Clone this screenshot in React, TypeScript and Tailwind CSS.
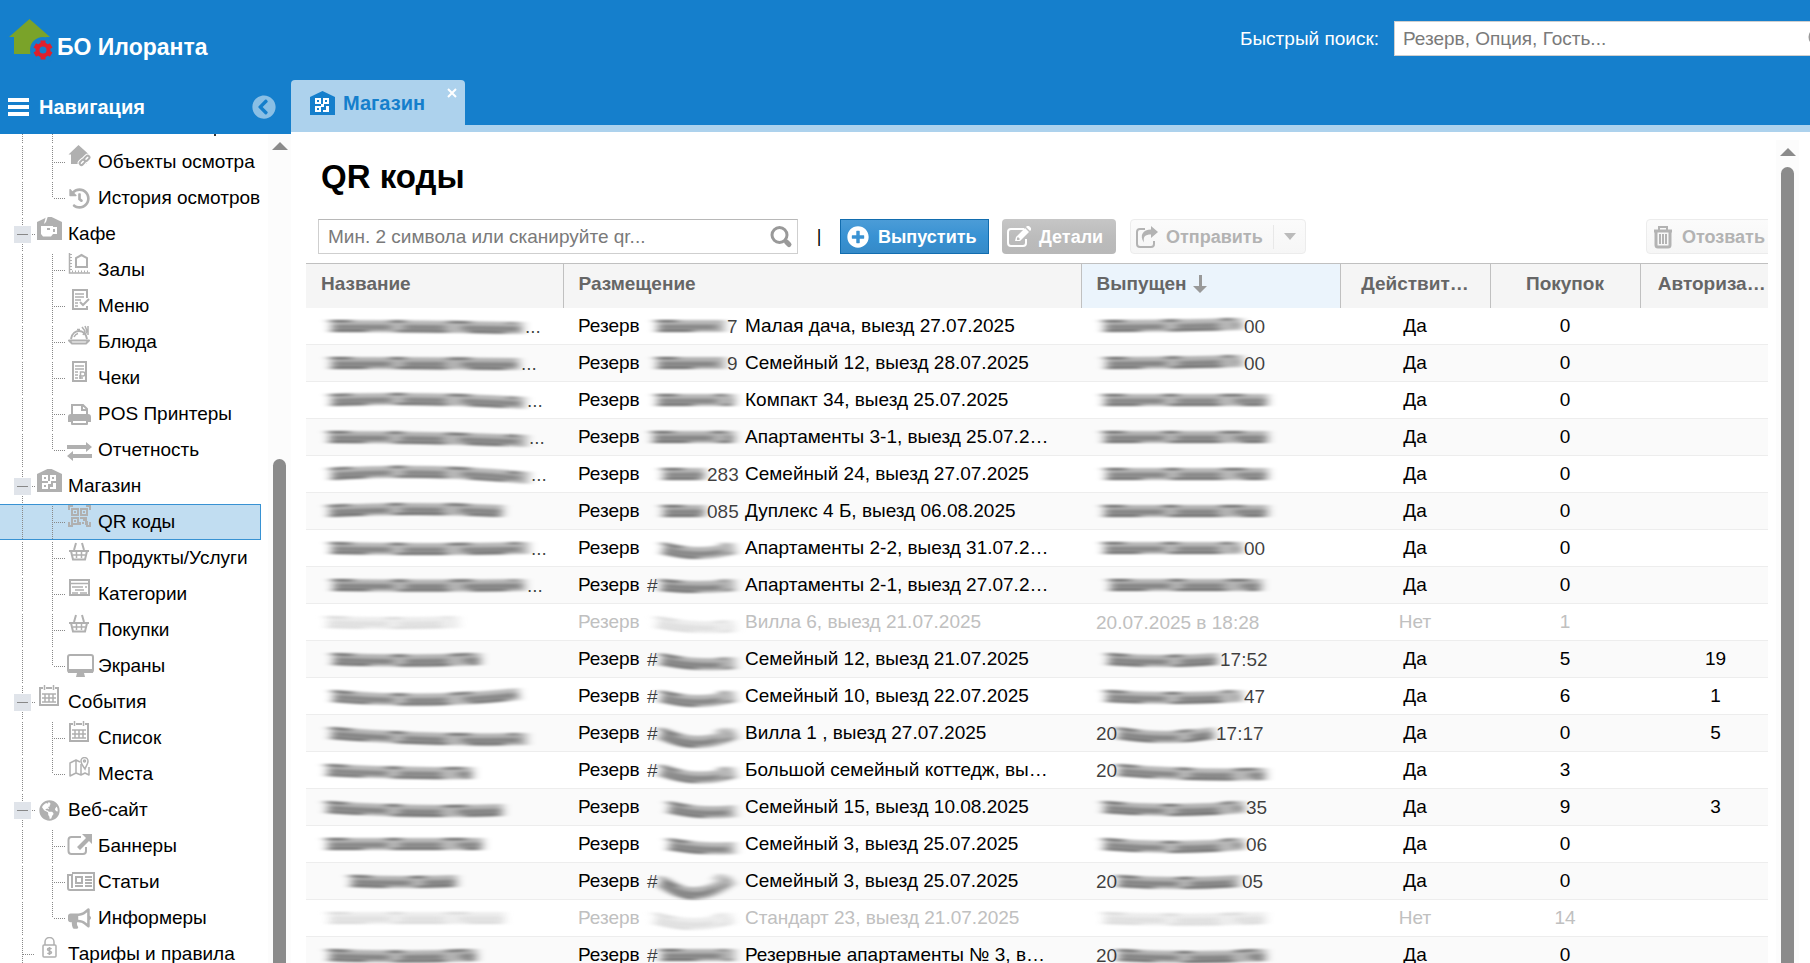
import type { ReactNode } from "react";
import {
  FaBullhorn,
  FaChevronCircleLeft,
  FaGlobeAmericas,
  FaHistory,
  FaPlusCircle,
} from "react-icons/fa";

type Icon = () => ReactNode;

type TreeItem = {
  label: string;
  level: 1 | 2;
  icon: Icon;
  leaf?: boolean;
  last?: boolean;
  selected?: boolean;
};

type Row = {
  name: Blot;
  order: Blot;
  place: string;
  issued: Blot;
  valid: string;
  bought: number;
  auth?: number;
};

// x / width of the smudge, how far it sags in the middle and at the end
type Blot = {
  x: number;
  w: number;
  sag?: number;
  end?: number;
  head?: string;
  tail?: string;
  text?: string;
};

/* Tree icons, drawn on a 31x36 row cell */

const ShopShape = () => (
  <>
    <path fill="currentColor" d="M0 6 12.500 0 25 6V24H0Z" />
    <g className="text-white" fill="currentColor">
      <path fillRule="evenodd" d="M5 7h6v6H5ZM7 9v2h2V9Z" />
      <path fillRule="evenodd" d="M13 7h6v6h-6ZM15 9v2h2V9Z" />
      <path fillRule="evenodd" d="M5 15h6v6H5ZM7 17v2h2v-2Z" />
      <path d="M11 13h3v3h-3ZM16 15h3v6h-6v-2h3Z" />
    </g>
  </>
);

const CafeIcon = () => (
  <>
    <path fill="currentColor" d="M0 6 12.500 0 25 6V24H0Z" />
    <path
      className="text-white"
      fill="currentColor"
      fillRule="evenodd"
      d="M9 0h2L9 6 7 8ZM4 10h12v1h4v7h-4l-2 2.500H6L4 18ZM16 13v3h2v-3ZM10 12v2h3v-2Z"
    />
  </>
);

const ObjectsIcon = () => (
  <>
    <path fill="currentColor" d="M11.500 1 22 10.500H19.500V20H4v-9.500H1.500Z" />
    <g fill="none" stroke="white" strokeWidth="4">
      <rect x="12.500" y="16.500" width="6" height="3.500" rx="1.700" transform="rotate(-45 15.500 18.500)" />
      <rect x="17" y="12.500" width="6" height="3.500" rx="1.700" transform="rotate(-45 20 14.500)" />
    </g>
    <g fill="none" stroke="currentColor" strokeWidth="2">
      <rect x="12.500" y="16.500" width="6" height="3.500" rx="1.700" transform="rotate(-45 15.500 18.500)" />
      <rect x="17" y="12.500" width="6" height="3.500" rx="1.700" transform="rotate(-45 20 14.500)" />
    </g>
  </>
);

const HistoryIcon = () => <FaHistory x={2} y={8} size={21} />;

const HallIcon = () => (
  <g fill="none" stroke="currentColor">
    <path strokeWidth="1.500" d="M2.500 1v20H23" />
    <path strokeWidth="2" strokeDasharray="1 2" d="M4 2v17M5 19.500h18" />
    <path strokeWidth="2" d="M9 15V6l5.500-3L20 6v9Z" />
  </g>
);

const MenuIcon = () => (
  <g fill="none" stroke="currentColor">
    <path strokeWidth="2" d="M20 10V2H6v19h14v-3" />
    <path strokeWidth="1.500" d="M8 6h9M8 9h9M8 12h6M8 15h3M8 18h3" />
    <path strokeWidth="2" d="m13 14 3 3 6-6" />
  </g>
);

const DishIcon = () => (
  <g fill="none" stroke="currentColor" strokeWidth="2">
    <path strokeLinejoin="round" d="M2 16.500h20l-3 3H5ZM4 15c1-6 5-8 8-8s7 2 8 8" />
    <path strokeWidth="1.500" d="M10 5.500h3M12 5v2M7 13c1-2 2-3 4-3.500M15 3l3 4-2 4M18 2l2 5-2 4M21 2v9" />
  </g>
);

const CheckIcon = () => (
  <g fill="none" stroke="currentColor">
    <path strokeWidth="2" d="M6 2h13v19H6Z" />
    <path strokeWidth="1.500" d="M8 6h9M8 9h9M8 12h3M8 15h3M8 18h3" />
    <path strokeWidth="1.500" d="M13.500 19v-7h2.500a2 2 0 0 1 0 4h-4M12 18h4" />
  </g>
);

const PrinterIcon = () => (
  <>
    <path fill="none" stroke="currentColor" strokeWidth="2" d="M5 19V9h11l4 4v6M15 9v5h5" />
    <path fill="currentColor" d="M4 18h17a3 3 0 0 1 3 3v5h-4v-3H5v3H1v-5a3 3 0 0 1 3-3Z" />
    <path fill="none" stroke="currentColor" strokeWidth="2" strokeLinejoin="round" d="M5 24h15v4H5Z" />
  </>
);

const ExchangeIcon = () => (
  <path
    fill="currentColor"
    d="M0 13h19v-3l6 5-6 5v-3H0ZM25 26H6v3l-6-5 6-5v3h19Z"
  />
);

const QrShape = () => (
  <g fill="none" stroke="currentColor">
    <path strokeWidth="2" d="M2 6V2h4M19 2h4v4M2 18v4h4M19 22h4v-4" />
    <path strokeWidth="2" d="M5 5h6v6H5ZM14 5h6v6h-6ZM5 14h6v6H5Z" />
    <path strokeWidth="2" d="M7 8h2M16 8h2M7 17h2M13 14h4v3M19 13v5h2M13 18v3M15 19h2M18 20h3" />
  </g>
);

const BasketIcon = () => (
  <g fill="none" stroke="currentColor" strokeWidth="2">
    <path d="M2 11h20M4 11l2 8.500h12l2-8.500M7 10 9 3M17 10 15 3" />
    <path strokeWidth="1.500" d="M9.500 12v6M14.500 12v6M6 15h12" />
  </g>
);

const CategoryIcon = () => (
  <g fill="none" stroke="currentColor" strokeWidth="1.500">
    <path strokeWidth="2" d="M3 4h19v15H3Z" />
    <path d="M3 7.500h19M5 11h11M18 11h2M8 14h9M5 17h6M13 17h7" />
  </g>
);

const ScreenIcon = () => (
  <>
    <rect x="1" y="7" width="25" height="17" rx="2" fill="none" stroke="currentColor" strokeWidth="2" />
    <path fill="currentColor" d="M1 21h25v4H17l1 4H9l1-4H1Z" />
  </>
);

const CalendarIcon = () => (
  <g fill="none" stroke="currentColor" strokeWidth="1.500">
    <path strokeWidth="2" d="M6 4H3v17h18V4h-3M9 4h6" />
    <path d="M7.500 1v5M16.500 1v5M5 10h14M5 14h14M5 18h14M8 10v8M12 10v8M16 10v8" />
  </g>
);

const MapIcon = () => (
  <g fill="none" stroke="currentColor" strokeWidth="1.500">
    <path strokeLinejoin="round" d="M14 8v11l-5-2-6 3V7l6-3 4 2M9 4v13M14 19l4-2 4 2v-8" />
    <path d="M18 13c-2-3-4-5-4-8a3.500 3.500 0 0 1 7 0c0 3-2 5-3 8Z" />
    <circle cx="17.500" cy="5" r="1" />
  </g>
);

const GlobeIcon = () => <FaGlobeAmericas x={2} y={8} size={21} />;

const ExternalIcon = () => (
  <>
    <path fill="none" stroke="currentColor" strokeWidth="2" d="M14 9H4.500A3 3 0 0 0 1.500 12v11a3 3 0 0 0 3 3H16a3 3 0 0 0 3-3v-4" />
    <path fill="currentColor" d="M15 6h10v10l-3-3-9 9-3-3 9-9Z" />
  </>
);

const NewsIcon = () => (
  <g fill="none" stroke="currentColor" strokeWidth="2">
    <path d="M5 9h22v17H3a2 2 0 0 1-2-2V11h4v13" />
    <path d="M9 13h6v6H9ZM8 22h8M18 13h7M18 16h7M18 19h7M18 22h7" />
  </g>
);

const HornIcon = () => <FaBullhorn x={1} y={7} size={23} />;

const LockIcon = () => (
  <g fill="none" stroke="currentColor" strokeWidth="1.500">
    <rect x="6" y="9" width="13" height="12" rx="1" />
    <path d="M8 9V6a4 4 0 0 1 9 0v3" />
    <path d="M14.500 13c-1-1-4-1-4 .500s4 1.500 4 3-3 1.500-4 .500M12.500 11v8" />
  </g>
);

const tree: TreeItem[] = [
  { label: "Объекты осмотра", level: 2, icon: ObjectsIcon },
  { label: "История осмотров", level: 2, icon: HistoryIcon, last: true },
  { label: "Кафе", level: 1, icon: CafeIcon },
  { label: "Залы", level: 2, icon: HallIcon },
  { label: "Меню", level: 2, icon: MenuIcon },
  { label: "Блюда", level: 2, icon: DishIcon },
  { label: "Чеки", level: 2, icon: CheckIcon },
  { label: "POS Принтеры", level: 2, icon: PrinterIcon },
  { label: "Отчетность", level: 2, icon: ExchangeIcon, last: true },
  { label: "Магазин", level: 1, icon: ShopShape },
  { label: "QR коды", level: 2, icon: QrShape, selected: true },
  { label: "Продукты/Услуги", level: 2, icon: BasketIcon },
  { label: "Категории", level: 2, icon: CategoryIcon },
  { label: "Покупки", level: 2, icon: BasketIcon },
  { label: "Экраны", level: 2, icon: ScreenIcon, last: true },
  { label: "События", level: 1, icon: CalendarIcon },
  { label: "Список", level: 2, icon: CalendarIcon },
  { label: "Места", level: 2, icon: MapIcon, last: true },
  { label: "Веб-сайт", level: 1, icon: GlobeIcon },
  { label: "Баннеры", level: 2, icon: ExternalIcon },
  { label: "Статьи", level: 2, icon: NewsIcon },
  { label: "Информеры", level: 2, icon: HornIcon, last: true },
  { label: "Тарифы и правила", level: 1, icon: LockIcon, leaf: true },
];

const rows: Row[] = [
  { name: { x: 6, w: 200, end: 2, tail: "..." }, order: { x: 10, w: 76, tail: "7" }, place: "Малая дача, выезд 27.07.2025", issued: { x: 4, w: 146, end: -2, tail: "00" }, valid: "Да", bought: 0 },
  { name: { x: 6, w: 196, end: 1, tail: "..." }, order: { x: 10, w: 76, tail: "9" }, place: "Семейный 12, выезд 28.07.2025", issued: { x: 6, w: 144, end: -2, tail: "00" }, valid: "Да", bought: 0 },
  { name: { x: 6, w: 202, sag: -3, end: 3, tail: "..." }, order: { x: 10, w: 86 }, place: "Компакт 34, выезд 25.07.2025", issued: { x: 4, w: 172 }, valid: "Да", bought: 0 },
  { name: { x: 4, w: 206, end: 4, tail: "..." }, order: { x: 6, w: 90 }, place: "Апартаменты 3-1, выезд 25.07.2…", issued: { x: 4, w: 172 }, valid: "Да", bought: 0 },
  { name: { x: 6, w: 206, sag: -6, end: 4, tail: "..." }, order: { x: 16, w: 50, tail: "283" }, place: "Семейный 24, выезд 27.07.2025", issued: { x: 6, w: 170 }, valid: "Да", bought: 0 },
  { name: { x: 4, w: 182, sag: -4 }, order: { x: 16, w: 50, tail: "085" }, place: "Дуплекс 4 Б, выезд 06.08.2025", issued: { x: 4, w: 172 }, valid: "Да", bought: 0 },
  { name: { x: 6, w: 206, sag: 2, tail: "..." }, order: { x: 16, w: 80, sag: 10 }, place: "Апартаменты 2-2, выезд 31.07.2…", issued: { x: 4, w: 146, tail: "00" }, valid: "Да", bought: 0 },
  { name: { x: 8, w: 200, sag: 1, tail: "..." }, order: { x: 14, w: 82, sag: 4, head: "#" }, place: "Апартаменты 2-1, выезд 27.07.2…", issued: { x: 10, w: 160 }, valid: "Да", bought: 0 },
  { name: { x: 2, w: 140, sag: 2 }, order: { x: 10, w: 86, sag: 8, end: 4 }, place: "Вилла 6, выезд 21.07.2025", issued: { x: 0, w: 0, text: "20.07.2025 в 18:28" }, valid: "Нет", bought: 1 },
  { name: { x: 8, w: 156, sag: 3 }, order: { x: 14, w: 82, sag: 8, end: 4, head: "#" }, place: "Семейный 12, выезд 21.07.2025", issued: { x: 8, w: 118, sag: 4, tail: "17:52" }, valid: "Да", bought: 5, auth: 19 },
  { name: { x: 8, w: 194, sag: 8, end: -2 }, order: { x: 14, w: 82, sag: 10, head: "#" }, place: "Семейный 10, выезд 22.07.2025", issued: { x: 6, w: 144, sag: 4, tail: "47" }, valid: "Да", bought: 6, auth: 1 },
  { name: { x: 6, w: 204, sag: 8, end: 6 }, order: { x: 14, w: 82, sag: 18, head: "#" }, place: "Вилла 1 , выезд 27.07.2025", issued: { x: 18, w: 104, sag: 8, head: "20", tail: "17:17" }, valid: "Да", bought: 0, auth: 5 },
  { name: { x: 2, w: 154, sag: 4, end: 3 }, order: { x: 14, w: 82, sag: 14, end: 2, head: "#" }, place: "Большой семейный коттедж, вы…", issued: { x: 18, w: 156, sag: 6, end: 4, head: "20" }, valid: "Да", bought: 3 },
  { name: { x: 2, w: 184, sag: 6, end: 3 }, order: { x: 22, w: 74, sag: 8, end: 4 }, place: "Семейный 15, выезд 10.08.2025", issued: { x: 4, w: 148, sag: 6, tail: "35" }, valid: "Да", bought: 9, auth: 3 },
  { name: { x: 2, w: 164 }, order: { x: 22, w: 74, sag: 6, end: 4 }, place: "Семейный 3, выезд 25.07.2025", issued: { x: 4, w: 148, sag: 6, tail: "06" }, valid: "Да", bought: 0 },
  { name: { x: 26, w: 114, sag: 2 }, order: { x: 14, w: 78, sag: 26, end: -2, head: "#" }, place: "Семейный 3, выезд 25.07.2025", issued: { x: 18, w: 130, sag: 4, head: "20", tail: "05" }, valid: "Да", bought: 0 },
  { name: { x: 4, w: 184 }, order: { x: 8, w: 86, sag: 12 }, place: "Стандарт 23, выезд 21.07.2025", issued: { x: 4, w: 170, sag: 3 }, valid: "Нет", bought: 14 },
  { name: { x: 4, w: 156, sag: 3 }, order: { x: 14, w: 82, head: "#" }, place: "Резервные апартаменты № 3, в…", issued: { x: 18, w: 156, sag: 4, head: "20" }, valid: "Да", bought: 0 },
];

// Blurs far more along the line than across it
const SmearFilter = () => (
  <svg className="hidden" aria-hidden="true">
    <filter id="smear" filterUnits="userSpaceOnUse" x="-20" y="-10" width="300" height="60">
      <feGaussianBlur stdDeviation="5 1" />
    </filter>
  </svg>
);

// Masked value: a few soft strokes running along the same curve
const Smudge = ({ blot }: { blot: Blot }) => {
  const { x, w, sag = 0, end = 0, head, tail, text } = blot;
  const curve = (dy: number, from = 0, to = 0) =>
    `M${x + from} ${18 + dy}Q${x + w / 2} ${18 + dy + sag} ${x + w - to} ${18 + dy + end}`;
  return (
    <svg className="block w-full h-9 overflow-visible" aria-hidden="true">
      {w > 0 && (
        <g fill="none" stroke="currentColor" filter="url(#smear)">
          <path strokeWidth="12" strokeOpacity="0.28" d={curve(0, 4, 4)} />
          <path strokeWidth="5" strokeOpacity="0.25" strokeDasharray="58 13 41 17" d={curve(1, 6, 6)} />
          <path strokeWidth="2" strokeOpacity="0.5" strokeDasharray="22 39 15 43" d={curve(-5, 2, 14)} />
          <path strokeWidth="2" strokeOpacity="0.45" strokeDasharray="36 29 51 22" d={curve(5, 4, 8)} />
        </g>
      )}
      <g fill="currentColor" fillOpacity="0.75">
        {head && <text x={head === "#" ? 4 : 0} y="25">{head}</text>}
        {tail && <text x={x + w - 2} y="25">{tail}</text>}
        {text && <text fillOpacity="1" x="0" y="25">{text}</text>}
      </g>
    </svg>
  );
};

const SearchGlyph = () => (
  <svg className="w-6 h-6 shrink-0 text-[#999]" viewBox="0 0 24 24" fill="none" stroke="currentColor" aria-hidden="true">
    <circle cx="10.500" cy="10" r="7.500" strokeWidth="3" />
    <path strokeWidth="5" strokeLinecap="round" d="m17.500 17 2.500 2.500" />
  </svg>
);

const TreeRow = ({ item }: { item: TreeItem }) => {
  const { label, level, icon: Glyph, leaf, last, selected } = item;
  return (
    <li
      className={`flex h-9 items-center whitespace-nowrap overflow-hidden border border-l-0 ${
        selected ? "bg-[#c1ddf1] border-[#3892d3]" : "border-transparent"
      }`}
    >
      <svg
        className={`-my-px h-9 shrink-0 ${level === 1 ? "w-[37px]" : "w-[67px]"}`}
        fill="none"
        stroke="#888"
        aria-hidden="true"
      >
        <path strokeDasharray="1 1" d="M22.500 0v36" />
        {level === 1 ? (
          <>
            <path strokeDasharray="1 1" d={leaf ? "M23 18.500h12" : "M30 18.500h5"} />
            {!leaf && (
              <>
                <rect x="14" y="10" width="17" height="17" fill="#e0e4ea" stroke="none" />
                <path d="M17 18.500h11" />
              </>
            )}
          </>
        ) : (
          <path strokeDasharray="1 1" d={last ? "M52.500 0v18M54 18.500h11" : "M52.500 0v36M54 18.500h11"} />
        )}
      </svg>
      <svg className="-my-px w-[31px] h-9 shrink-0 text-[#b0b0b0]" viewBox="0 0 31 36" aria-hidden="true">
        <Glyph />
      </svg>
      <a href="#" className="text-black">{label}</a>
    </li>
  );
};

const Sidebar = () => (
  <nav className="flex flex-1 min-h-0 bg-white" aria-label="Навигация">
    <div className="w-[261px] shrink-0 overflow-hidden">
      <svg className="block h-[10px] w-full" fill="none" stroke="#888" aria-hidden="true">
        <path strokeDasharray="1 1" d="M22.500 0v10M52.500 0v10" />
        <path stroke="#333" strokeWidth="2" d="M215 0v2" />
      </svg>
      <ul>
        {tree.map((item, index) => (
          <TreeRow key={index} item={item} />
        ))}
      </ul>
    </div>
    <div className="ml-auto w-[23px] bg-[#fcfcfc] flex flex-col items-center pt-2">
      <svg className="w-4 h-2 shrink-0" viewBox="0 0 16 8" aria-hidden="true">
        <path fill="#8b8b8b" d="M8 0 16 8H0Z" />
      </svg>
      <div className="mt-[309px] w-[13px] flex-1 rounded-t-full bg-[#8b8b8b]"></div>
    </div>
  </nav>
);

const Toolbar = () => (
  <div className="flex items-start h-11 mt-6 ml-3 text-[18px] font-bold">
    <div className="flex items-center w-[480px] h-[35px] pl-2 pr-1 border border-[#cfcfcf] border-t-[#b8b8b8] bg-white">
      <input
        type="text"
        aria-label="Поиск"
        placeholder="Мин. 2 символа или сканируйте qr..."
        className="flex-1 min-w-0 pl-px text-[19px] font-normal outline-none placeholder:text-[#7a7a7a]"
      />
      <SearchGlyph />
    </div>
    <span className="w-[42px] pt-[5px] text-center font-normal">|</span>
    <button className="flex items-center h-[35px] w-[149px] pl-[6px] border border-[#126daf] bg-linear-to-b from-[#4b9cd7] via-[#3892d3] via-50% to-[#358ac8] text-white">
      <FaPlusCircle className="w-[22px] h-[22px] mr-[9px]" />
      Выпустить
    </button>
    <button
      disabled
      className="flex items-center h-[35px] w-[114px] pl-1 ml-[13px] rounded bg-linear-to-b from-[#c6c6c6] via-[#bcbcbc] via-50% to-[#b8b8b8] text-white"
    >
      <svg className="w-[27px] h-6 mr-[6px]" viewBox="0 0 27 24" fill="none" aria-hidden="true">
        <path stroke="currentColor" strokeWidth="2" d="M18 4H5a3 3 0 0 0-3 3v11a3 3 0 0 0 3 3h12a3 3 0 0 0 3-3v-4" />
        <path fill="currentColor" fillRule="evenodd" d="m10 12 9-9 4 4-9 9H9Zm1 1v2h2l1-1-2-2ZM20 2l1-1h2l2 2v2l-1 1Z" />
      </svg>
      Детали
    </button>
    <button
      disabled
      className="flex items-center h-[35px] w-44 pl-[5px] ml-[14px] rounded border border-[#ececec] bg-linear-to-b from-[#fbfbfb] to-[#f6f6f6] text-[#b3b3b3]"
    >
      <svg className="w-6 h-6 mr-[6px]" viewBox="0 0 24 24" fill="none" aria-hidden="true">
        <path stroke="currentColor" strokeWidth="2" d="M9 4H4a3 3 0 0 0-3 3v12a3 3 0 0 0 3 3h11a3 3 0 0 0 3-3v-3" />
        <path fill="currentColor" d="M15 1l7 6-7 6V9.500c-6 0-8 2-7 8-5-7-1-13 7-13Z" />
      </svg>
      Отправить
      <span className="ml-auto flex items-center justify-center w-8 h-6 border-l border-[#e8e8e8]">
        <svg className="w-3 h-[7px]" viewBox="0 0 12 7" aria-hidden="true">
          <path fill="#bbb" d="M0 0h12L6 7Z" />
        </svg>
      </span>
    </button>
    <button
      disabled
      className="flex items-center h-[35px] w-[145px] pl-1 ml-auto rounded border border-[#ececec] bg-linear-to-b from-[#fbfbfb] to-[#f6f6f6] text-[#b3b3b3]"
    >
      <svg className="w-6 h-6 mr-[7px]" viewBox="0 0 24 24" fill="none" stroke="currentColor" strokeWidth="2" aria-hidden="true">
        <path strokeWidth="3" d="M3 6h18M5 6v14a2 2 0 0 0 2 2h10a2 2 0 0 0 2-2V6" />
        <path d="M8 5V2h8v3M9 9v10M12 9v10M15 9v10" />
      </svg>
      Отозвать
    </button>
  </div>
);

const CodesTable = () => (
  <table className="table-fixed w-full border-collapse">
    <colgroup>
      <col className="w-[257px]" />
      <col />
      <col className="w-[259px]" />
      <col className="w-[150px]" />
      <col className="w-[150px]" />
      <col className="w-[151px]" />
    </colgroup>
    <thead>
      <tr className="h-11 bg-[#f5f5f5] text-[#666] text-left border-t border-[#c0c0c0]">
        <th className="pb-1 pl-[15px] border-r border-[#c0c0c0]">Название</th>
        <th className="pb-1 pl-[15px] border-r border-[#c0c0c0]">Размещение</th>
        <th className="pb-1 pl-[15px] border-r border-[#c0c0c0] bg-[#ebf4fc]">
          <span className="flex items-center gap-[6px]">
            Выпущен
            <svg className="w-[14px] h-[18px]" viewBox="0 0 14 18" fill="#999" aria-hidden="true">
              <path d="M6 0h3v11h5l-7 7-7-7h6Z" />
            </svg>
          </span>
        </th>
        <th className="pb-1 text-center border-r border-[#c0c0c0]">Действит…</th>
        <th className="pb-1 text-center border-r border-[#c0c0c0]">Покупок</th>
        <th className="pb-1 pr-2 text-center">Авториза…</th>
      </tr>
    </thead>
    <tbody>
      {rows.map((row, index) => (
        <tr
          key={index}
          className={`h-[37px] border-b border-[#ededed] ${index % 2 ? "bg-[#fafafa]" : "bg-white"} ${
            row.valid === "Нет" ? "text-[#c0c0c0]" : "text-black"
          }`}
        >
          <td className="p-0 pl-[15px]"><Smudge blot={row.name} /></td>
          <td className="p-0 pl-[15px]">
            <div className="flex items-center">
              <span className="w-[65px] shrink-0">Резерв</span>
              <span className="w-[102px] shrink-0"><Smudge blot={row.order} /></span>
              <span className="whitespace-nowrap">{row.place}</span>
            </div>
          </td>
          <td className="p-0 pl-[15px]"><Smudge blot={row.issued} /></td>
          <td className="p-0 text-center">{row.valid}</td>
          <td className="p-0 text-center">{row.bought}</td>
          <td className="p-0 text-center">{row.auth}</td>
        </tr>
      ))}
    </tbody>
  </table>
);

export default function App() {
  return (
    <div className="flex h-screen overflow-hidden bg-white text-black text-[19px] leading-6 font-['Liberation_Sans',Arial,sans-serif]">
      <SmearFilter />
      <aside className="flex flex-col w-[291px] shrink-0">
        <div className="flex items-center h-20 bg-[#157fcc] text-white">
          <svg className="w-[45px] h-11 ml-2 shrink-0" viewBox="0 0 45 44" aria-hidden="true">
            <path fill="#7aa329" d="M21.500 1 42 19H38v3l-14 14H6V19H1Z" />
            <circle cx="35" cy="32" r="13" fill="#157fcc" />
            <circle cx="35" cy="32" r="5.500" fill="none" stroke="#e0202c" strokeWidth="4" />
            <path
              stroke="#e0202c"
              strokeWidth="5"
              fill="none"
              d="M35 27v-4.500M35 37v4.500M39.500 29.500l3.700-2.200M39.500 34.500l3.700 2.200M30.500 29.500l-3.700-2.200M30.500 34.500l-3.700 2.200"
            />
          </svg>
          <span className="ml-1 mt-[14px] text-[23px] font-bold">БО Илоранта</span>
        </div>
        <div className="flex items-center h-[54px] pl-2 pr-[15px] bg-[#157fcc] text-white">
          <svg className="w-[21px] h-[18px] mr-[10px]" viewBox="0 0 21 18" fill="currentColor" aria-hidden="true">
            <path d="M0 0h21v4H0ZM0 7h21v4H0ZM0 14h21v4H0Z" />
          </svg>
          <span className="text-[20px] font-bold">Навигация</span>
          <button className="ml-auto text-[#8abfe5]" aria-label="Свернуть">
            <FaChevronCircleLeft className="w-6 h-6" />
          </button>
        </div>
        <Sidebar />
      </aside>

      <main className="flex flex-col flex-1 min-w-0">
        <header className="h-20 shrink-0 bg-[#157fcc] flex justify-end items-start pt-[21px] overflow-hidden">
          <label htmlFor="quick" className="mr-[15px] mt-[6px] text-white">Быстрый поиск:</label>
          <div className="flex items-center w-[446px] -mr-[30px] h-[35px] shrink-0 bg-white border border-[#cfcfcf] pl-2 pr-2">
            <input
              id="quick"
              type="text"
              placeholder="Резерв, Опция, Гость..."
              className="flex-1 min-w-0 outline-none placeholder:text-[#7a7a7a]"
            />
            <SearchGlyph />
          </div>
        </header>
        <div className="flex shrink-0 h-[52px] bg-[#157fcc] border-b-[7px] border-[#add2ed]">
          <div className="flex w-[174px] h-[45px] rounded-t bg-[#add2ed] text-[#157fcc] pl-[19px]">
            <svg className="w-[25px] h-6 mt-[11px]" viewBox="0 0 25 24" aria-hidden="true">
              <ShopShape />
            </svg>
            <span className="ml-2 mt-[11px] font-bold text-[20px]">Магазин</span>
            <button className="ml-auto mr-2 mt-2 w-[10px] h-[10px] text-white" aria-label="Закрыть">
              <svg className="w-[10px] h-[10px]" viewBox="0 0 10 10" stroke="currentColor" strokeWidth="2">
                <path d="m1 1 8 8M9 1 1 9" />
              </svg>
            </button>
          </div>
        </div>
        <div className="flex flex-1 min-h-0 pt-2">
          <div className="flex-1 min-w-0 ml-[15px] overflow-hidden">
            <div className="w-[calc(100%+23px)]">
              <h1 className="ml-[15px] mt-[19px] text-[33px] leading-9 font-bold">QR коды</h1>
              <Toolbar />
              <CodesTable />
            </div>
          </div>
          <div className="ml-2 mr-[11px] w-[23px] bg-[#fcfcfc] flex flex-col items-center pt-2">
            <svg className="w-4 h-2 shrink-0" viewBox="0 0 16 8" aria-hidden="true">
              <path fill="#8b8b8b" d="M8 0 16 8H0Z" />
            </svg>
            <div className="mt-[11px] w-[13px] flex-1 rounded-t-full bg-[#8b8b8b]"></div>
          </div>
        </div>
      </main>
    </div>
  );
}
